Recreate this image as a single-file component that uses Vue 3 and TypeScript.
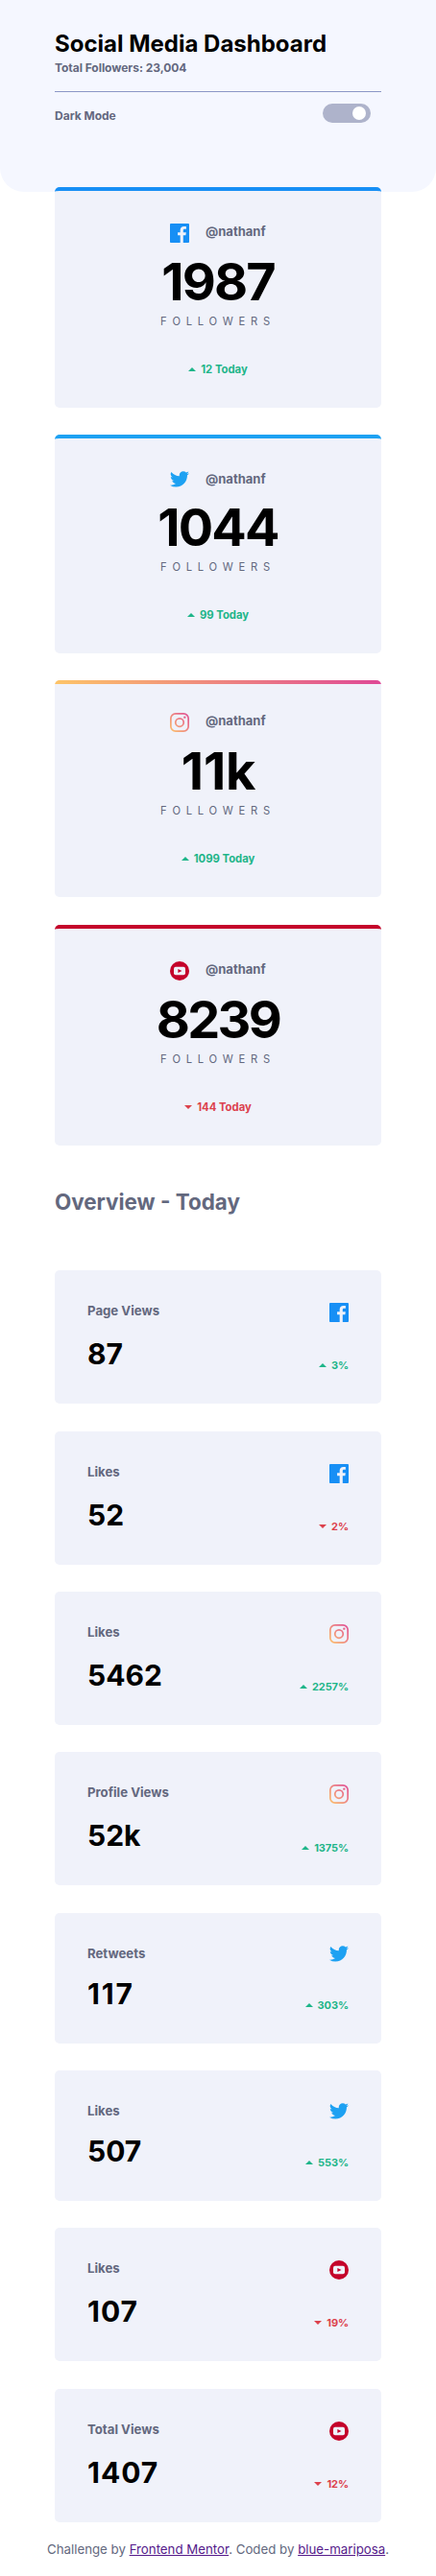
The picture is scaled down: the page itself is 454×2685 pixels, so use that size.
<script setup lang="ts">
import { ref } from 'vue'

type Network = 'facebook' | 'twitter' | 'instagram' | 'youtube'

interface FollowerCard {
  network: Network
  handle: string
  count: string
  change: string
  up: boolean
}

interface OverviewCard {
  network: Network
  label: string
  value: string
  change: string
  up: boolean
}

const darkMode = ref(false)

const followers: FollowerCard[] = [
  { network: 'facebook', handle: '@nathanf', count: '1987', change: '12 Today', up: true },
  { network: 'twitter', handle: '@nathanf', count: '1044', change: '99 Today', up: true },
  { network: 'instagram', handle: '@nathanf', count: '11k', change: '1099 Today', up: true },
  { network: 'youtube', handle: '@nathanf', count: '8239', change: '144 Today', up: false },
]

const overview: OverviewCard[] = [
  { network: 'facebook', label: 'Page Views', value: '87', change: '3%', up: true },
  { network: 'facebook', label: 'Likes', value: '52', change: '2%', up: false },
  { network: 'instagram', label: 'Likes', value: '5462', change: '2257%', up: true },
  { network: 'instagram', label: 'Profile Views', value: '52k', change: '1375%', up: true },
  { network: 'twitter', label: 'Retweets', value: '117', change: '303%', up: true },
  { network: 'twitter', label: 'Likes', value: '507', change: '553%', up: true },
  { network: 'youtube', label: 'Likes', value: '107', change: '19%', up: false },
  { network: 'youtube', label: 'Total Views', value: '1407', change: '12%', up: false },
]

const tracking = (value: string): string =>
  value.startsWith('11') ? 'looser' : value.startsWith('1') ? 'loose' : ''
</script>

<template>
  <svg class="defs" width="0" height="0" aria-hidden="true">
    <defs>
      <linearGradient id="insta" x1="0" y1="20" x2="20" y2="0" gradientUnits="userSpaceOnUse">
        <stop offset="0" stop-color="#FDC468" />
        <stop offset="1" stop-color="#DF4996" />
      </linearGradient>
      <symbol id="icon-facebook" viewBox="0 0 20 20">
        <path fill="#178FF5" d="M18.896 0H1.104C.494 0 0 .494 0 1.104v17.793C0 19.506.494 20 1.104 20h9.58v-7.745H8.076V9.237h2.606V7.01c0-2.583 1.578-3.99 3.883-3.99 1.104 0 2.052.082 2.329.119v2.7h-1.598c-1.254 0-1.496.597-1.496 1.47v1.928h2.989l-.39 3.018h-2.6V20h5.098c.608 0 1.102-.494 1.102-1.104V1.104C20 .494 19.506 0 18.896 0z" />
      </symbol>
      <symbol id="icon-twitter" viewBox="0 0 20 17">
        <path fill="#1DA1F2" d="M20 2.172a8.192 8.192 0 01-2.357.646 4.11 4.11 0 001.804-2.27 8.22 8.22 0 01-2.605.996A4.096 4.096 0 0013.847.248c-2.65 0-4.596 2.472-3.998 5.037A11.648 11.648 0 011.392.998a4.109 4.109 0 001.27 5.478 4.086 4.086 0 01-1.858-.513c-.045 1.9 1.318 3.679 3.291 4.075a4.113 4.113 0 01-1.853.07 4.106 4.106 0 003.833 2.849A8.25 8.25 0 010 14.658a11.616 11.616 0 006.29 1.843c7.618 0 11.922-6.434 11.662-12.205A8.354 8.354 0 0020 2.172z" />
      </symbol>
      <symbol id="icon-instagram" viewBox="0 0 20 20">
        <rect x=".85" y=".85" width="18.3" height="18.3" rx="5" fill="none" stroke="url(#insta)" stroke-width="1.7" />
        <circle cx="10" cy="10" r="4.25" fill="none" stroke="url(#insta)" stroke-width="1.75" />
        <circle cx="15.34" cy="4.67" r="1.2" fill="url(#insta)" />
      </symbol>
      <symbol id="icon-youtube" viewBox="0 0 20 20">
        <circle cx="10" cy="10" r="10" fill="#C4032A" />
        <rect x="4" y="5.8" width="12" height="8.4" rx="1.9" fill="#F0F2FA" />
        <path fill="#C4032A" d="M8.4 7.9v4.2l4.1-2.1z" />
      </symbol>
    </defs>
  </svg>

  <header class="hero">
    <h1 class="title">Social Media Dashboard</h1>
    <p class="total">Total Followers: 23,004</p>
    <div class="mode">
      <span class="mode-label">Dark Mode</span>
      <button
        class="switch"
        :class="{ 'switch-dark': darkMode }"
        type="button"
        aria-label="Dark Mode"
        @click="darkMode = !darkMode"
      >
        <span class="knob"></span>
      </button>
    </div>
  </header>

  <main class="content">
    <section class="stack">
      <article v-for="card in followers" :key="card.network" class="card follower" :class="card.network">
        <div class="account">
          <svg class="icon" :class="`icon-${card.network}`"><use :href="`#icon-${card.network}`" /></svg>
          <span class="handle">{{ card.handle }}</span>
        </div>
        <p class="count" :class="tracking(card.count)">{{ card.count }}</p>
        <p class="caption">FOLLOWERS</p>
        <p class="change" :class="card.up ? 'up' : 'down'">
          <svg class="arrow" viewBox="0 0 8 4"><path :d="card.up ? 'M0 4L4 0l4 4z' : 'M0 0l4 4 4-4z'" /></svg>
          <span>{{ card.change }}</span>
        </p>
      </article>
    </section>

    <h2 class="heading">Overview - Today</h2>

    <section class="stack">
      <article v-for="(card, i) in overview" :key="i" class="card metric" :class="`metric-${card.network}`">
        <div class="metric-top">
          <span class="label">{{ card.label }}</span>
          <svg class="icon" :class="`icon-${card.network}`"><use :href="`#icon-${card.network}`" /></svg>
        </div>
        <div class="metric-bottom">
          <span class="value" :class="tracking(card.value)">{{ card.value }}</span>
          <span class="change" :class="card.up ? 'up' : 'down'">
            <svg class="arrow" viewBox="0 0 8 4"><path :d="card.up ? 'M0 4L4 0l4 4z' : 'M0 0l4 4 4-4z'" /></svg>
            <span>{{ card.change }}</span>
          </span>
        </div>
      </article>
    </section>
  </main>

  <footer class="attribution">
    Challenge by <a class="link" href="#">Frontend Mentor</a>. Coded by <a class="link" href="#">blue-mariposa</a>.
  </footer>
</template>

<style>
body {
  margin: 0;
  background: #fff;
  font-family: Inter, 'Liberation Sans', sans-serif;
}
</style>

<style scoped>
.defs {
  display: block;
}

.hero {
  box-sizing: border-box;
  height: 200px;
  padding: 31px 57px 0;
  background: #f5f7ff;
  border-radius: 0 0 25px 25px;
}

.title {
  margin: 0;
  font-size: 24px;
  font-weight: 700;
  line-height: 29px;
  color: #000;
}

.total {
  margin: 3px 0 0;
  font-size: 12px;
  font-weight: 700;
  line-height: 15px;
  letter-spacing: -0.04px;
  color: #63687e;
}

.mode {
  display: flex;
  justify-content: space-between;
  margin-top: 17px;
  padding: 12px 11px 0 0;
  border-top: 1px solid #8b97c6;
}

.mode-label {
  padding-top: 5px;
  font-size: 12px;
  font-weight: 700;
  line-height: 15px;
  color: #63687e;
}

.switch {
  display: flex;
  justify-content: flex-end;
  align-items: center;
  width: 50px;
  height: 20px;
  padding: 0 5px;
  border: 0;
  border-radius: 10px;
  background: #aeb3cb;
}

.switch-dark {
  justify-content: flex-start;
}

.knob {
  width: 14px;
  height: 14px;
  border-radius: 50%;
  background: #fff;
}

.content {
  width: 340px;
  margin: -5px auto 0;
}

.stack {
  display: flex;
  flex-direction: column;
  gap: 28.4px;
}

.card {
  box-sizing: border-box;
  border-radius: 5px;
  background: #f0f2fa;
}

.follower {
  height: 230px;
  padding-top: 34px;
  border-top: 4px solid;
  text-align: center;
}

.facebook {
  border-color: #178ff5;
}

.twitter {
  height: 227.2px;
  border-color: #1da1f2;
}

.instagram {
  height: 226.2px;
  border-top: 0;
  background: linear-gradient(90deg, #fdc468, #df4996) top / 100% 4px no-repeat #f0f2fa;
}

.youtube {
  border-color: #c4032a;
}

.icon {
  display: block;
  width: 20px;
  height: 20px;
}

.icon-twitter {
  height: 17px;
}

.account {
  display: flex;
  justify-content: center;
  gap: 16.7px;
  min-height: 17.2px;
}

.handle {
  font-size: 13px;
  font-weight: 700;
  line-height: 16px;
  color: #63687e;
}

.count {
  margin: 8px 0 0;
  font-size: 54px;
  font-weight: 700;
  line-height: 65px;
  letter-spacing: -2.6px;
  color: #000;
}

.count.loose {
  letter-spacing: -1.85px;
}

.count.looser {
  padding-left: 1px;
  letter-spacing: -0.15px;
}

.caption {
  margin: 1px 0 0;
  font-size: 11.2px;
  line-height: 16px;
  letter-spacing: 5.75px;
  color: #63687e;
}

.change {
  display: flex;
  justify-content: center;
  align-items: center;
  gap: 5px;
  margin: 34px 0 0;
  font-size: 11.3px;
  font-weight: 700;
  line-height: 16px;
}

.up {
  color: #1eb589;
}

.down {
  color: #dc414c;
}

.arrow {
  width: 8px;
  height: 4px;
  fill: currentColor;
}

.heading {
  margin: 44px 0 56.6px;
  font-size: 22.4px;
  font-weight: 700;
  line-height: 30px;
  color: #63687e;
}

.metric {
  height: 139px;
  padding: 34px 34px 0;
}

.metric-twitter {
  height: 135.92px;
}

.metric-top,
.metric-bottom {
  display: flex;
  justify-content: space-between;
  align-items: flex-start;
}

.label {
  font-size: 13.2px;
  font-weight: 700;
  line-height: 16px;
  color: #63687e;
}

.metric-bottom {
  margin-top: 15px;
}

.value {
  font-size: 30px;
  font-weight: 700;
  line-height: 36px;
  color: #000;
}

.value.loose {
  letter-spacing: 1px;
}

.value.looser {
  letter-spacing: 1.8px;
}

.metric .change {
  margin: 22.2px 0 0;
  font-size: 11px;
  letter-spacing: -0.1px;
}

.attribution {
  margin-top: 19.3px;
  font-size: 13.28px;
  line-height: 18px;
  text-align: center;
  color: #63687e;
}

.link {
  color: #551a8b;
}
</style>
